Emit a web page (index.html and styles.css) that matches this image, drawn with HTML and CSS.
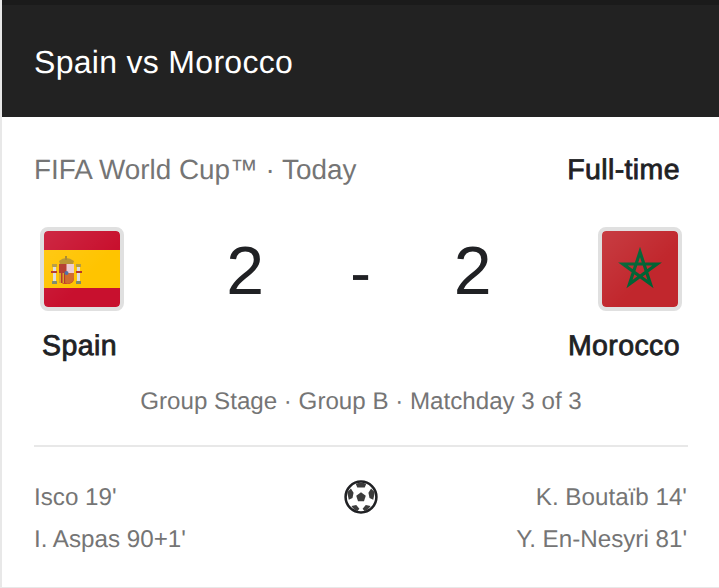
FILE: index.html
```html
<!DOCTYPE html>
<html lang="en">
<head>
<meta charset="utf-8">
<title>Spain vs Morocco</title>
<link rel="stylesheet" href="styles.css">
</head>
<body>
<main class="card">
  <header class="head"><h1 class="title">Spain vs Morocco</h1></header>
  <section class="body">
    <div class="meta">
      <span class="comp">FIFA World Cup™ · Today</span>
      <span class="status">Full-time</span>
    </div>
    <div class="match">
      <div class="team">
        <div class="flag">
          <svg viewBox="0 0 76 76" width="76" height="76">
            <rect width="76" height="19" fill="#c8102e"/>
            <rect y="19" width="76" height="38" fill="#ffc400"/>
            <rect y="57" width="76" height="19" fill="#c8102e"/>
            <rect x="9" y="35" width="3" height="16" fill="#ddd"/><rect x="8" y="33" width="5" height="3" fill="#b59a3c"/><rect x="8" y="50" width="5" height="3" fill="#7d8a6a"/>
            <rect x="33" y="35" width="3" height="16" fill="#ddd"/><rect x="32" y="33" width="5" height="3" fill="#b59a3c"/><rect x="32" y="50" width="5" height="3" fill="#7d8a6a"/>
            <rect x="7" y="40" width="6" height="2" fill="#b5352a"/><rect x="32" y="40" width="6" height="2" fill="#b5352a"/>
            <path d="M15 30q7-6 15 0l-1 3H16z" fill="#b8922a"/>
            <rect x="21" y="25" width="2" height="4" fill="#a8862a"/>
            <path d="M15 33h15v14q0 6-7.500 6T15 47z" fill="#c0392b"/>
            <rect x="15" y="33" width="7.500" height="9" fill="#b3392b"/>
            <rect x="22.500" y="33" width="7.500" height="9" fill="#eccbd0"/>
            <rect x="15" y="42" width="7.500" height="10" fill="#d9a520"/>
            <rect x="17" y="42" width="1.500" height="10" fill="#b8302a"/><rect x="20" y="42" width="1.500" height="10" fill="#b8302a"/>
            <path d="M22.500 42H30v5q0 5-7.500 6z" fill="#cf6a2c"/>
            <circle cx="22.500" cy="42" r="2" fill="#4a6fa5"/>
          </svg>
        </div>
        <div class="name">Spain</div>
      </div>
      <div class="score"><span>2</span><span class="dash">-</span><span>2</span></div>
      <div class="team team-right">
        <div class="flag">
          <svg viewBox="0 0 76 76" width="76" height="76">
            <rect width="76" height="76" fill="#c1272d"/>
            <path d="M38 21 48.500 53 21 33H55L27.500 53z" fill="none" stroke="#006233" stroke-width="3.200" stroke-miterlimit="10"/>
          </svg>
        </div>
        <div class="name">Morocco</div>
      </div>
    </div>
    <div class="stage">Group Stage · Group B · Matchday 3 of 3</div>
    <div class="goals">
      <div class="scorers">
        <div>Isco 19'</div>
        <div>I. Aspas 90+1'</div>
      </div>
      <svg class="ball" viewBox="0 0 32 32" width="34" height="34">
        <circle cx="16" cy="16" r="14.500" fill="#fff" stroke="#202124" stroke-width="2.400"/>
        <path d="M16 11.500l4.500 3.300-1.700 5.200h-5.600l-1.700-5.200z" fill="#3c3c3c"/>
        <path d="M11 3.500q5-1.800 10 0L19.500 7h-7zM3 11.500 6.500 8l2.500 4-1 5-3.500 1.500zM29 11.500 25.500 8 23 12l1 5 3.500 1.500zM7 24.500l4.500-1 3 3.500-2 2.500q-3.500-1.500-5.500-5zM25 24.500l-4.500-1-3 3.500 2 2.500q3.500-1.500 5.500-5z" fill="#3c3c3c"/>
      </svg>
      <div class="scorers scorers-right">
        <div>K. Boutaïb 14'</div>
        <div>Y. En-Nesyri 81'</div>
      </div>
    </div>
  </section>
</main>
</body>
</html>
```
FILE: styles.css
```css
html, body {
  margin: 0;
  padding: 0;
  background: #fff;
}
body {
  width: 719px;
  height: 588px;
  overflow: hidden;
  font-family: "Liberation Sans", Arial, sans-serif;
  text-rendering: geometricPrecision;
}
.card {
  height: 588px;
  box-sizing: border-box;
  background: #fff;
  border-left: 2px solid #e8e8e8;
  border-bottom: 1px solid #e8e8e8;
}
.head {
  height: 117px;
  box-sizing: border-box;
  background: #222;
  border-top: 5px solid #1b1b1b;
  padding: 2px 0 0 32px;
  display: flex;
  align-items: center;
}
.title {
  margin: 0;
  color: #fff;
  font-size: 32px;
  font-weight: 400;
  letter-spacing: 0.3px;
}
.body {
  padding: 0 31px 0 32px;
}
.meta {
  display: flex;
  justify-content: space-between;
  align-items: center;
  padding-top: 35px;
  height: 36px;
}
.comp {
  color: #757575;
  font-size: 27.850px;
}
.status {
  color: #202124;
  font-size: 28.500px;
  font-weight: 400;
  letter-spacing: 0.4px;
  -webkit-text-stroke: 0.8px #202124;
  margin-right: 8px;
}
.match {
  display: flex;
  justify-content: space-between;
  align-items: flex-start;
  padding-top: 39px;
}
.team {
  width: 120px;
  display: flex;
  flex-direction: column;
  align-items: flex-start;
}
.team-right {
  align-items: flex-end;
}
.flag {
  width: 76px;
  height: 76px;
  margin-left: 6px;
  border: 4px solid #e0e0e0;
  border-radius: 8px;
  background: #e0e0e0;
  overflow: hidden;
  position: relative;
}
.flag svg {
  display: block;
  border-radius: 4px;
}
.flag::after {
  content: "";
  position: absolute;
  inset: 0;
  border-radius: 4px;
  background: linear-gradient(135deg, rgba(255, 255, 255, 0.1), rgba(255, 255, 255, 0) 60%);
}
.team-right .flag {
  margin: 0 6px 0 0;
}
.name {
  margin: 19px 0 0 8px;
  color: #202124;
  font-size: 28.500px;
  font-weight: 400;
  letter-spacing: 0.4px;
  -webkit-text-stroke: 0.8px #202124;
  white-space: nowrap;
}
.team-right .name {
  margin: 19px 8px 0 0;
}
.score {
  display: flex;
  align-items: center;
  gap: 84.500px;
  color: #202124;
  font-size: 68px;
  line-height: 84px;
  margin: -1px 4px 0 0;
}
.dash {
  font-size: 62px;
  margin: 6px -1.700px 0 1.700px;
}
.stage {
  text-align: center;
  color: #757575;
  font-size: 24.150px;
  margin-top: 25px;
  height: 42px;
  line-height: 28px;
  border-bottom: 2px solid #e8e8e8;
  padding-bottom: 15px;
}
.goals {
  display: flex;
  justify-content: space-between;
  align-items: flex-start;
  margin-top: 30px;
  color: #757575;
  font-size: 24.200px;
  line-height: 42px;
}
.ball {
  margin-top: 3px;
}
.scorers {
  width: 250px;
}
.scorers-right {
  text-align: right;
  margin-right: 1px;
}
```
